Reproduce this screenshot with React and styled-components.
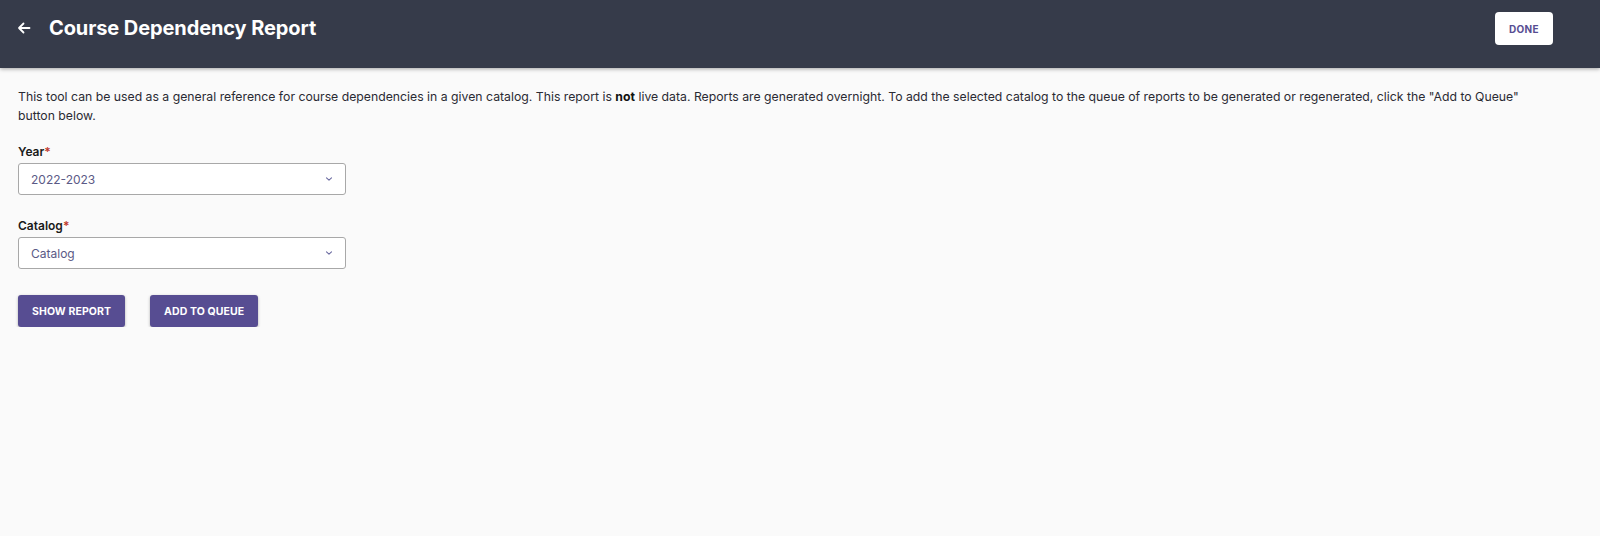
import React from "react";
import styled, { createGlobalStyle } from "styled-components";

const Global = createGlobalStyle`
  html, body { margin: 0; padding: 0; background: #fafafa; }
  body { font-family: Inter, "Noto Sans", sans-serif; color: #222; }
  * { box-sizing: border-box; }
`;

const Header = styled.header`
  height: 68px;
  background: #363b4a;
  display: flex;
  align-items: center;
  padding: 0 47px 0 16px;
  box-shadow: 0 1px 4px rgba(0,0,0,0.35);
  position: relative;
`;

const BackButton = styled.button`
  background: none;
  border: none;
  padding: 0;
  width: 16px;
  height: 16px;
  display: flex;
  align-items: center;
  justify-content: center;
  color: #fff;
  cursor: pointer;
  margin-top: -13px;
`;

const Title = styled.h1`
  margin: -12px 0 0 17px;
  font-size: 20px;
  font-weight: 700;
  color: #fff;
  letter-spacing: -0.1px;
  flex: 1;
`;

const DoneButton = styled.button`
  width: 58px;
  height: 33px;
  background: #fff;
  border: none;
  border-radius: 4px;
  font-family: Inter, sans-serif;
  font-size: 10px;
  font-weight: 700;
  color: #574d92;
  letter-spacing: 0.3px;
  margin-top: -11px;
  cursor: pointer;
`;

const Main = styled.main`
  padding: 19px 18px 0 18px;
  max-width: 1560px;
`;

const Intro = styled.p`
  margin: 0;
  font-size: 12.25px;
  line-height: 19px;
  color: #2a2a33;
  b { font-weight: 700; color: #111; }
`;

const Field = styled.div`
  display: flex;
  flex-direction: column;
  width: 328px;
  margin-top: ${p => p.$top}px;
`;

const Label = styled.label`
  font-size: 12px;
  font-weight: 600;
  color: #1a1a1a;
  line-height: 16px;
  margin-bottom: 3px;
  span { color: #c0392b; }
`;

const Select = styled.div`
  height: 32px;
  border: 1px solid #a8a8a8;
  border-radius: 3px;
  background: #fff;
  display: flex;
  align-items: center;
  justify-content: space-between;
  padding: 0 12px 0 12px;
  font-size: 12px;
  color: #5b5a86;
`;

const Chevron = () => (
  <svg width="8" height="8" viewBox="0 0 8 8" fill="none">
    <path d="M1.5 2.8 L4 5.2 L6.5 2.8" stroke="#6a6aa0" strokeWidth="1.1" strokeLinecap="round" strokeLinejoin="round" />
  </svg>
);

const Actions = styled.div`
  display: flex;
  gap: 25px;
  margin-top: 26px;
`;

const PrimaryButton = styled.button`
  height: 32px;
  padding: 0 14px;
  background: #574d92;
  color: #fff;
  border: none;
  border-radius: 3px;
  font-family: Inter, sans-serif;
  font-size: 10.5px;
  font-weight: 700;
  letter-spacing: 0.1px;
  box-shadow: 0 1px 3px rgba(0,0,0,0.3);
  cursor: pointer;
`;

export default function App() {
  return (
    <>
      <Global />
      <Header>
        <BackButton aria-label="Back">
          <svg width="14" height="14" viewBox="0 0 14 14" fill="none">
            <path d="M12.5 7 H2 M6.5 2.5 L2 7 L6.5 11.5" stroke="#fff" strokeWidth="1.8" strokeLinecap="round" strokeLinejoin="round" />
          </svg>
        </BackButton>
        <Title>Course Dependency Report</Title>
        <DoneButton>DONE</DoneButton>
      </Header>
      <Main>
        <Intro>
          This tool can be used as a general reference for course dependencies in a given catalog. This report is <b>not</b> live data. Reports are generated overnight. To add the selected catalog to the queue of reports to be generated or regenerated, click the "Add to Queue" button below.
        </Intro>
        <Field $top={19}>
          <Label>Year<span>*</span></Label>
          <Select>2022-2023<Chevron /></Select>
        </Field>
        <Field $top={23}>
          <Label>Catalog<span>*</span></Label>
          <Select>Catalog<Chevron /></Select>
        </Field>
        <Actions>
          <PrimaryButton>SHOW REPORT</PrimaryButton>
          <PrimaryButton>ADD TO QUEUE</PrimaryButton>
        </Actions>
      </Main>
    </>
  );
}
